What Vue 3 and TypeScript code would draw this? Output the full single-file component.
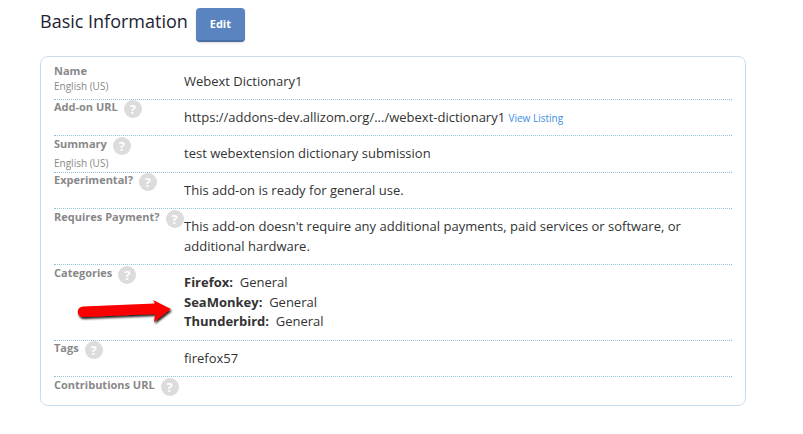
<template>
  <div class="page">
    <div class="heading">
      <h2>Basic Information</h2>
      <button class="edit-btn" type="button">Edit</button>
    </div>
    <div class="card">
      <div v-for="row in rows" :key="row.label" class="row" :style="{ height: row.height + 'px' }">
        <div class="label">
          <div class="label-line">
            <strong>{{ row.label }}</strong>
            <span v-if="row.help" class="help">?</span>
          </div>
          <div v-if="row.locale" class="locale">{{ row.locale }}</div>
        </div>
        <div class="value">
          <template v-if="row.label === 'Add-on URL'">
            {{ row.value }} <a class="listing">View Listing</a>
          </template>
          <template v-else-if="row.label === 'Categories'">
            <div v-for="cat in categories" :key="cat" class="cat"><b>{{ cat }}:</b>&nbsp; General</div>
          </template>
          <template v-else>{{ row.value }}</template>
        </div>
      </div>
    </div>
    <svg class="arrow" width="100" height="40" viewBox="0 0 100 40">
      <defs>
        <filter id="arrow-shadow" x="-20%" y="-40%" width="140%" height="180%">
          <feDropShadow dx="1" dy="2" stdDeviation="1.2" flood-color="#000" flood-opacity="0.9" />
        </filter>
      </defs>
      <path d="M8 9.5 L80 6.5 L78 3 L96 12 L79 25 L80 17 L8 20 A5.25 5.25 0 0 1 8 9.5 Z" fill="#fb0000" filter="url(#arrow-shadow)" />
    </svg>
  </div>
</template>

<script setup lang="ts">
interface Row {
  label: string
  height: number
  help?: boolean
  locale?: string
  value?: string
}

const categories = ['Firefox', 'SeaMonkey', 'Thunderbird']

const rows: Row[] = [
  { label: 'Name', height: 36.5, locale: 'English (US)', value: 'Webext Dictionary1' },
  { label: 'Add-on URL', height: 36.5, help: true, value: 'https://addons-dev.allizom.org/.../webext-dictionary1' },
  { label: 'Summary', height: 36.5, help: true, locale: 'English (US)', value: 'test webextension dictionary submission' },
  { label: 'Experimental?', height: 36.5, help: true, value: 'This add-on is ready for general use.' },
  {
    label: 'Requires Payment?',
    height: 56,
    help: true,
    value: "This add-on doesn't require any additional payments, paid services or software, or additional hardware."
  },
  { label: 'Categories', height: 75.5, help: true },
  { label: 'Tags', height: 36.5, help: true, value: 'firefox57' },
  { label: 'Contributions URL', height: 28, help: true }
]
</script>

<style scoped>
.page {
  position: relative;
  width: 803px;
  height: 434px;
  padding: 8px 0 0 40px;
  box-sizing: border-box;
  overflow: hidden;
  background: #fff;
  font-family: "Open Sans", sans-serif;
  color: #333;
}

.heading {
  display: flex;
  align-items: flex-start;
  gap: 8px;
  height: 48px;
}

h2 {
  margin: 0;
  font-size: 18px;
  font-weight: 400;
  line-height: 27px;
  color: #1c2333;
}

.edit-btn {
  width: 49px;
  height: 34px;
  padding: 0 0 2px;
  border: 0;
  border-bottom: 2px solid #4a6fa5;
  border-radius: 4px;
  background: #5a84c0;
  box-shadow: 0 1px 2px rgba(0, 0, 0, 0.15);
  color: #fff;
  font-family: inherit;
  font-size: 11px;
  font-weight: 700;
}

.card {
  width: 706px;
  height: 350px;
  box-sizing: border-box;
  padding: 6px 13px 0;
  border: 1px solid #c9dcee;
  border-radius: 8px;
}

.row {
  display: flex;
  box-sizing: border-box;
  border-bottom: 1px dotted #8fc4d4;
}

.row:last-child {
  border-bottom: 0;
}

.label {
  width: 130px;
  flex: none;
  padding-top: 0.5px;
  color: #888;
  font-size: 11px;
  line-height: 14px;
}

.label strong {
  font-weight: 700;
  white-space: nowrap;
}

.label-line {
  display: flex;
  align-items: flex-start;
  gap: 6px;
  white-space: nowrap;
}

.locale {
  margin-top: 1.5px;
  font-size: 10px;
  line-height: 14px;
}

.help {
  flex: none;
  width: 18px;
  height: 18px;
  border-radius: 50%;
  background: #dcdcdc;
  color: #fff;
  font-size: 13px;
  font-weight: 700;
  line-height: 18px;
  text-align: center;
}

.value {
  flex: 1;
  padding-top: 8px;
  font-size: 13px;
  line-height: 19.5px;
  color: #333;
}

.row:first-child .value {
  padding-top: 9px;
}

.cat b {
  font-weight: 700;
}

.listing {
  font-size: 10px;
  color: #3a8ee6;
}

.arrow {
  position: absolute;
  left: 75px;
  top: 297px;
}
</style>
